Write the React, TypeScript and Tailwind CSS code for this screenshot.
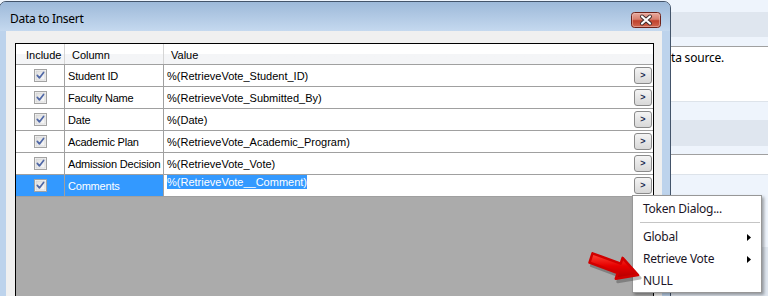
import React from "react";

const UI = { fontFamily: '"Noto Sans", "Open Sans", sans-serif' };
const GRID = { fontFamily: '"Liberation Sans", Arial, sans-serif' };

const rows = [
  { col: "Student ID", val: "%(RetrieveVote_Student_ID)" },
  { col: "Faculty Name", val: "%(RetrieveVote_Submitted_By)" },
  { col: "Date", val: "%(Date)" },
  { col: "Academic Plan", val: "%(RetrieveVote_Academic_Program)" },
  { col: "Admission Decision", val: "%(RetrieveVote_Vote)" },
  { col: "Comments", val: "%(RetrieveVote__Comment)", selected: true },
];

function CheckBox() {
  return (
    <svg width="13" height="13" viewBox="0 0 13 13" className="block">
      <defs>
        <linearGradient id="cbg" x1="0" y1="0" x2="1" y2="1">
          <stop offset="0" stopColor="#dedede" />
          <stop offset="1" stopColor="#fbfbfb" />
        </linearGradient>
      </defs>
      <rect x="0.5" y="0.5" width="12" height="12" fill="#f6f6f6" stroke="#a3a3a3" />
      <rect x="2" y="2" width="9" height="9" fill="url(#cbg)" stroke="#c9c9c9" strokeWidth="0.6" />
      <path d="M3.3 6.4 L5.4 8.9 L9.6 3.4" fill="none" stroke="#4f67a6" strokeWidth="1.7" strokeLinecap="round" strokeLinejoin="round" />
    </svg>
  );
}

function ArrowButton() {
  return (
    <div className="w-[18px] h-[17px] rounded-[3px] border border-[#8a8a8a] bg-gradient-to-b from-[#f4f4f4] to-[#d8d8d8] flex items-center justify-center text-[9px] leading-none text-[#1d2a52] font-bold" style={GRID}>
      &gt;
    </div>
  );
}

function CloseButton() {
  return (
    <svg width="30" height="16" viewBox="0 0 30 16" className="block">
      <defs>
        <linearGradient id="clg" x1="0" y1="0" x2="0" y2="1">
          <stop offset="0" stopColor="#e9aca1" />
          <stop offset="0.45" stopColor="#d7806f" />
          <stop offset="0.55" stopColor="#c0412c" />
          <stop offset="1" stopColor="#d26a52" />
        </linearGradient>
      </defs>
      <rect x="0.5" y="0.5" width="29" height="15" rx="3" fill="url(#clg)" stroke="#6e2219" />
      <rect x="1.5" y="1.5" width="27" height="13" rx="2" fill="none" stroke="#f0c4bb" strokeOpacity="0.5" />
      <path d="M11 4.5 L19 11.5 M19 4.5 L11 11.5" stroke="#3a2a2a" strokeWidth="4" strokeLinecap="round" />
      <path d="M11 4.5 L19 11.5 M19 4.5 L11 11.5" stroke="#ffffff" strokeWidth="2.2" strokeLinecap="round" />
    </svg>
  );
}

function SubArrow() {
  return (
    <svg width="4" height="7" viewBox="0 0 4 7" className="block">
      <path d="M0 0 L4 3.5 L0 7 Z" fill="#000" />
    </svg>
  );
}

function RedArrow() {
  return (
    <svg width="64" height="40" viewBox="0 0 64 40" className="block">
      <defs>
        <linearGradient id="rag" x1="0" y1="0" x2="0" y2="1">
          <stop offset="0" stopColor="#ff4a3a" />
          <stop offset="0.5" stopColor="#e60000" />
          <stop offset="1" stopColor="#b00000" />
        </linearGradient>
      </defs>
      <g transform="translate(2 3)" opacity="0.35">
        <polygon points="9.5,4.3 37.7,14.6 39.6,8.9 55,26.1 32.8,29.7 34.7,24 6.5,13.7" fill="#333" stroke="#333" strokeWidth="3" strokeLinejoin="round" />
      </g>
      <polygon points="9.5,4.3 37.7,14.6 39.6,8.9 55,26.1 32.8,29.7 34.7,24 6.5,13.7" fill="url(#rag)" stroke="#d00000" strokeWidth="2.5" strokeLinejoin="round" />
    </svg>
  );
}

export default function App() {
  return (
    <div className="relative w-[768px] h-[296px] overflow-hidden bg-[#eef4fc]">
      {/* background application */}
      <div className="flex flex-col h-full">
        <div className="h-[12px] bg-[#eef4fc]" />
        <div className="h-[26px] bg-[#dfe6ef]" />
        <div className="h-[10px] bg-[#eef4fc]" />
        <div className="h-[1px] bg-[#a0a0a0]" />
        <div className="h-[56px] bg-white pl-[671px] pt-[3px] text-[12px] leading-[16px] text-black tracking-[-0.2px]" style={UI}>ta source.</div>
        <div className="h-[1px] bg-[#dde3ea]" />
        <div className="h-[18px] bg-[#eef4fc]" />
        <div className="h-[27px] bg-[#dfe6ef]" />
        <div className="h-[9px] bg-[#eef4fc]" />
        <div className="h-[1px] bg-[#a0a0a0]" />
        <div className="h-[19px] bg-white" />
        <div className="h-[1px] bg-[#dde3ea]" />
        <div className="h-[75px] bg-[#eef4fc]" />
        <div className="flex-1 bg-[#dfe6ef] pl-[672px] pt-[33px] text-[12px] leading-[16px] text-black" style={UI}>Insert in it:</div>
      </div>

      {/* dialog window */}
      <div className="absolute left-[-1px] top-[1px] w-[672px] h-[310px] rounded-t-[7px] border border-[#43546a] bg-[#bdd3ec] flex flex-col">
        <div className="h-[29px] flex items-start justify-between pl-[10px] pr-[9px] rounded-t-[6px] bg-gradient-to-b from-[#9db9d9] to-[#c5d9ef]">
          <div className="mt-[9px] text-[12px] leading-[16px] text-black tracking-[-0.3px]" style={UI}>Data to Insert</div>
          <div className="mt-[10px]"><CloseButton /></div>
        </div>
        <div className="flex-1 ml-[6px] mr-[8px] bg-[#f0f0f0] pt-[12px] pl-[9px] pr-[8px] flex flex-col">
          <div className="flex-1 border border-black bg-[#ababab] flex flex-col text-[11px] text-black whitespace-nowrap" style={GRID}>
            {/* header */}
            <div className="h-[21px] flex border-b border-[#a0a0a0] bg-gradient-to-b from-white from-50% to-[#f4f5f7] to-50%">
              <div className="w-[49px] border-r border-[#d5d5d5] pl-[10px] pt-[2px] flex items-center">Include</div>
              <div className="w-[99px] border-r border-[#d5d5d5] pl-[7px] pt-[2px] flex items-center">Column</div>
              <div className="flex-1 pl-[7px] pt-[2px] flex items-center">Value</div>
            </div>
            {rows.map((r) => (
              <div key={r.col} className="h-[22px] flex border-b border-[#a0a0a0] bg-white">
                <div className={`w-[49px] shrink-0 border-r border-[#a0a0a0] pl-[18px] flex items-center ${r.selected ? "bg-[#3399ff]" : ""}`}>
                  <CheckBox />
                </div>
                <div className={`w-[99px] shrink-0 overflow-hidden border-r border-[#a0a0a0] pl-[3px] pt-[1px] flex items-center tracking-[-0.2px] ${r.selected ? "bg-[#3399ff] text-white" : ""}`}>
                  {r.col}
                </div>
                <div className="flex-1 pl-[3px] pr-[1px] flex items-center justify-between">
                  {r.selected ? (
                    <span className="self-start mt-[0px] bg-[#3399ff] text-white leading-[14px]">{r.val}</span>
                  ) : (
                    <span className="pt-[1px]">{r.val}</span>
                  )}
                  <ArrowButton />
                </div>
              </div>
            ))}
            <div className="flex-1 bg-[#ababab]" />
          </div>
        </div>
      </div>

      {/* context menu */}
      <div className="absolute left-[632px] top-[195px] w-[130px] h-[98px] border border-[#979797] bg-white shadow-[2px_2px_3px_rgba(0,0,0,0.35)] flex flex-col pt-[2px] text-[12px] text-[#1b1526] tracking-[-0.25px]" style={UI}>
        <div className="h-[22px] flex items-center pl-[10px]">Token Dialog...</div>
        <div className="h-[6px] flex items-center pl-[7px] pr-[1px]">
          <div className="w-full h-[2px] border-t border-[#c5c5c5] border-b border-b-white" />
        </div>
        <div className="h-[22px] flex items-center justify-between pl-[10px] pr-[10px]">Global<SubArrow /></div>
        <div className="h-[22px] flex items-center justify-between pl-[10px] pr-[10px]">Retrieve Vote<SubArrow /></div>
        <div className="h-[21px] flex items-center pl-[10px]">NULL</div>
      </div>

      {/* red arrow annotation */}
      <div className="absolute left-[583px] top-[249px]">
        <RedArrow />
      </div>
    </div>
  );
}
